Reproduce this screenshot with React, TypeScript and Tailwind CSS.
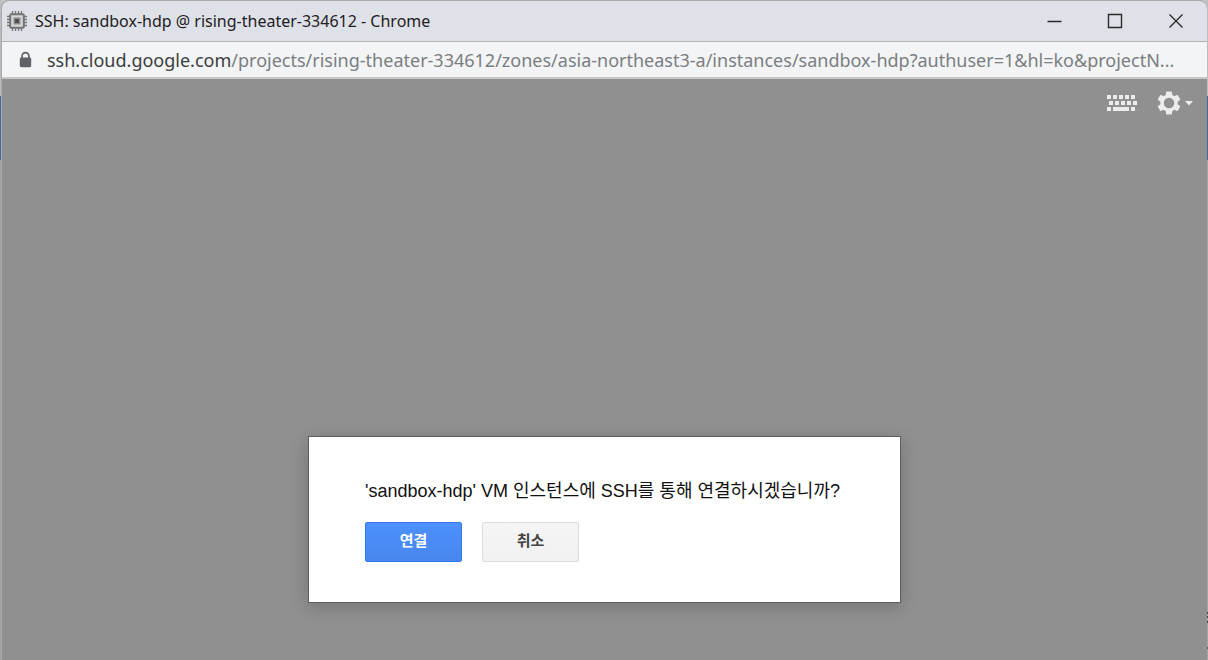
import type { ReactNode } from 'react';

export default function App() {
  return (
    <div className="flex h-screen min-h-[620px] bg-[#c4c4c4] font-['Noto_Sans','Noto_Sans_CJK_KR',sans-serif]">
      <SideStrip className="w-px" />
      <div className="flex min-w-0 flex-1 flex-col overflow-hidden rounded-t-lg border-t border-l border-[#a9a9a9] bg-[#909090]">
        <TitleBar />
        <AddressBar />
        <Terminal />
      </div>
      <SideStrip className="w-px">
        <div className="h-[2px] bg-[#4a4a4a]" />
        <div className="mt-[2px] h-[2px] bg-[#4a4a4a]" />
        <div className="mt-[3px] mb-6 h-[2px] bg-[#4a4a4a]" />
        <div className="mb-[11px] h-[2px] bg-[#5a5a5a]" />
      </SideStrip>
    </div>
  );
}

// sliver of the page behind the window
function SideStrip({ className, children }: { className: string; children?: ReactNode }) {
  return (
    <div className={`flex shrink-0 flex-col ${className}`}>
      <div className="h-24 bg-[#bcbcbc]" />
      <div className="h-16 bg-[#3f6aa8]" />
      <div className="flex flex-1 flex-col justify-end bg-[#a2a2a2]">{children}</div>
    </div>
  );
}

function TitleBar() {
  return (
    <header className="flex h-10 shrink-0 items-center bg-[#dee1e8] pr-px pl-[5px]">
      <ChipIcon />
      <h1 className="ml-2 min-w-0 flex-1 truncate text-base leading-6 text-[#1f2023]">
        SSH: sandbox-hdp @ rising-theater-334612 - Chrome
      </h1>
      <WindowButton label="Minimize">
        <path d="M1.5 8.5h14" />
      </WindowButton>
      <WindowButton label="Maximize">
        <path d="M1.5 1.5h13v13h-13z" />
      </WindowButton>
      <WindowButton label="Close">
        <path d="M1.5 1.5l13 13M14.5 1.5l-13 13" />
      </WindowButton>
    </header>
  );
}

function WindowButton({ label, children }: { label: string; children: ReactNode }) {
  return (
    <button type="button" aria-label={label} className="flex h-10 w-[61px] items-center justify-center">
      <svg width="16" height="16" viewBox="0 0 16 16" fill="none" stroke="#2a2a2a" strokeWidth="1.4">
        {children}
      </svg>
    </button>
  );
}

function AddressBar() {
  return (
    <div className="flex h-[38px] shrink-0 items-center border-t border-b-2 border-t-[#b4b4b4] border-b-[#c6c7c6] bg-[#f2f4f5] pr-5 pl-4">
      <svg width="16" height="18" viewBox="0 0 16 18" className="shrink-0">
        <path d="M4.1 8V5a3.4 3.4 0 0 1 6.8 0v3" fill="none" stroke="#5f6368" strokeWidth="1.7" />
        <rect x="1.8" y="6.6" width="11.4" height="9.6" rx="1.4" fill="#5f6368" />
      </svg>
      <p className="ml-[13px] min-w-0 flex-1 truncate text-lg leading-7 text-[#7b7e81]">
        <span className="text-[#3c3e40]">ssh.cloud.google.com</span>
        /projects/rising-theater-334612/zones/asia-northeast3-a/instances/sandbox-hdp?authuser=1&amp;hl=ko&amp;projectN...
      </p>
    </div>
  );
}

function Terminal() {
  return (
    <main className="flex flex-1 flex-col">
      <div className="flex h-12 items-center justify-end gap-5 pr-[14px]">
        <button type="button" aria-label="Keyboard">
          <KeyboardIcon />
        </button>
        <button type="button" aria-label="Settings" className="flex items-center gap-1">
          <GearIcon />
          <svg width="8" height="5" viewBox="0 0 8 5">
            <path d="M0 0h8L4 4.5z" fill="#ececec" />
          </svg>
        </button>
      </div>
      <div className="flex flex-1 items-end justify-center pb-[57px]">
        <ConnectDialog />
      </div>
    </main>
  );
}

function ConnectDialog() {
  return (
    <section
      role="dialog"
      aria-labelledby="connect-message"
      className="border border-[#5e5e5e] bg-white pt-10 pr-[60px] pb-10 pl-14 font-['Liberation_Sans','Noto_Sans_CJK_KR',sans-serif] shadow-[0_4px_16px_rgba(0,0,0,0.2)]"
    >
      <p id="connect-message" className="text-lg leading-7 text-[#111]">
        &apos;sandbox-hdp&apos; VM 인스턴스에 SSH를 통해 연결하시겠습니까?
      </p>
      <div className="mt-[17px] flex gap-5">
        <button
          type="button"
          className="h-10 w-[97px] rounded-xs border border-[#3079ed] bg-linear-to-b from-[#4d90fe] to-[#4787ed] pb-[2px] text-[15px] font-bold text-white"
        >
          연결
        </button>
        <button
          type="button"
          className="h-10 w-[97px] rounded-xs border border-[#dcdcdc] bg-linear-to-b from-[#f5f5f5] to-[#f1f1f1] pb-[2px] text-[15px] font-bold text-[#444]"
        >
          취소
        </button>
      </div>
    </section>
  );
}

function ChipIcon() {
  return (
    <svg width="20" height="20" viewBox="0 0 20 20" className="shrink-0">
      <path
        d="M5.5 0v20M8.5 0v20M11.5 0v20M14.5 0v20M0 5.5h20M0 8.5h20M0 11.5h20M0 14.5h20"
        stroke="#757575"
        strokeWidth="1.3"
      />
      <rect x="3.2" y="3.2" width="13.6" height="13.6" rx="1" fill="#d4d6da" stroke="#757575" strokeWidth="2" />
      <rect x="6.5" y="6.5" width="7" height="7" fill="#8a8a8a" />
      <rect x="8" y="8" width="4" height="4" fill="#505050" />
    </svg>
  );
}

function KeyboardIcon() {
  const keys = [0, 6, 12, 18, 24];
  return (
    <svg width="30" height="18" viewBox="0 0 30 18" fill="#ececec">
      {keys.map((x) => (
        <rect key={`top-${x}`} x={x} y="1" width="4" height="4" />
      ))}
      {keys.map((x) => (
        <rect key={`mid-${x}`} x={x + 2} y="7" width="4" height="4" />
      ))}
      <rect x="0" y="13" width="4" height="4" />
      <rect x="6" y="13" width="16" height="4" />
      <rect x="24" y="13" width="4" height="4" />
    </svg>
  );
}

function GearIcon() {
  return (
    <svg width="24" height="26" viewBox="2 1.3 20 21.4" fill="#ececec">
      <path d="M19.14 12.94c.04-.3.06-.61.06-.94 0-.32-.02-.64-.07-.94l2.03-1.58a.49.49 0 0 0 .12-.61l-1.92-3.32a.49.49 0 0 0-.59-.22l-2.39.96c-.5-.38-1.03-.7-1.62-.94l-.36-2.54a.48.48 0 0 0-.48-.41h-3.84a.47.47 0 0 0-.47.41l-.36 2.54c-.59.24-1.13.57-1.62.94l-2.39-.96a.48.48 0 0 0-.59.22L2.74 8.87a.47.47 0 0 0 .12.61l2.03 1.58c-.05.3-.09.63-.09.94s.02.64.07.94l-2.03 1.58a.49.49 0 0 0-.12.61l1.92 3.32c.12.22.37.29.59.22l2.39-.96c.5.38 1.03.7 1.62.94l.36 2.54c.05.24.24.41.48.41h3.84c.24 0 .44-.17.47-.41l.36-2.54c.59-.24 1.13-.56 1.62-.94l2.39.96c.22.08.47 0 .59-.22l1.92-3.32a.47.47 0 0 0-.12-.61l-2.01-1.58zM12 16.4a4.4 4.4 0 1 1 0-8.8 4.4 4.4 0 0 1 0 8.8z" />
    </svg>
  );
}
